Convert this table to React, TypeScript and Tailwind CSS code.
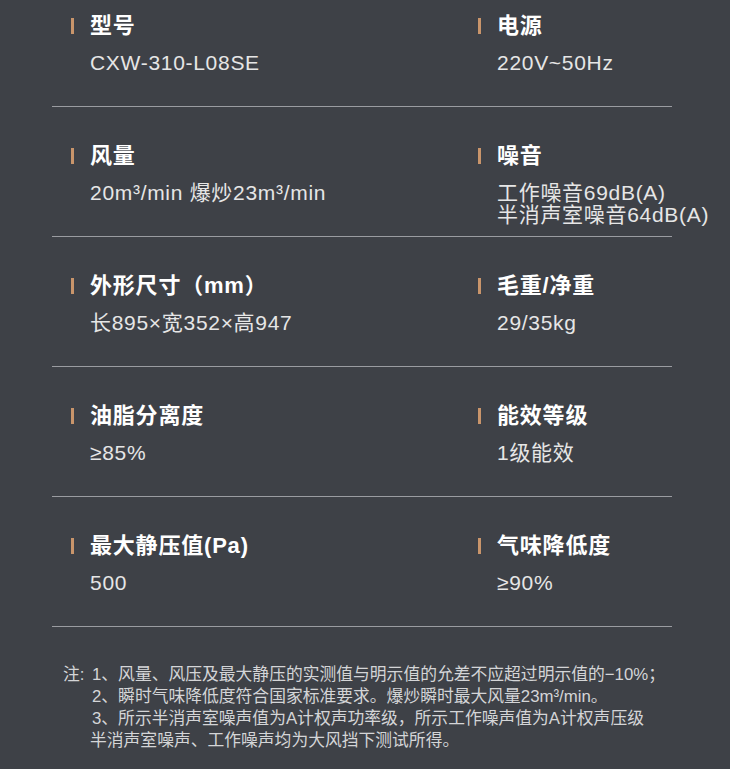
import React from 'react';

type Spec = { title: string; lines: React.ReactNode[] };

const rows: [Spec, Spec][] = [
  [
    { title: '型号', lines: ['CXW-310-L08SE'] },
    { title: '电源', lines: ['220V~50Hz'] },
  ],
  [
    { title: '风量', lines: ['20m³/min 爆炒23m³/min'] },
    { title: '噪音', lines: ['工作噪音69dB(A)', '半消声室噪音64dB(A)'] },
  ],
  [
    { title: '外形尺寸（mm）', lines: ['长895×宽352×高947'] },
    { title: '毛重/净重', lines: ['29/35kg'] },
  ],
  [
    { title: '油脂分离度', lines: ['≥85%'] },
    { title: '能效等级', lines: ['1级能效'] },
  ],
  [
    { title: '最大静压值(Pa)', lines: ['500'] },
    { title: '气味降低度', lines: ['≥90%'] },
  ],
];

const SpecCell = ({ spec }: { spec: Spec }) => (
  <div className="pl-[19px] whitespace-nowrap">
    <div className="flex items-center h-6">
      <div className="w-[3px] h-[16px] bg-[#c9956b] mr-4" />
      <span className="text-[22px] font-bold text-white leading-6 tracking-[0.8px]">{spec.title}</span>
    </div>
    <div className="pl-[19px] mt-[14px] text-[21px] leading-[22px] text-[#e6e6e6] tracking-[0.7px]">
      {spec.lines.map((l, i) => (
        <div key={i}>{l}</div>
      ))}
    </div>
  </div>
);

export default function App() {
  return (
    <div
      className="w-[730px] h-[769px] bg-[#3e4147] overflow-hidden"
      style={{ fontFamily: '"Liberation Sans", "Noto Sans CJK SC", sans-serif' }}
    >
      <div className="ml-[52px] w-[620px]">
        {rows.map((r, i) => (
          <div
            key={i}
            className={`grid grid-cols-[407px_1fr] border-b border-[#9a9ca1] ${i === 0 ? 'h-[107px] pt-[14px]' : 'h-[130px] pt-[37px]'}`}
          >
            <SpecCell spec={r[0]} />
            <SpecCell spec={r[1]} />
          </div>
        ))}
      </div>

      {/* notes */}
      <div className="flex mt-[37px] ml-[63px] text-[16.8px] leading-[22px] text-[#d4d5d7] whitespace-nowrap">
        <div className="w-[29px] shrink-0">注:</div>
        <div>
          <div>1、风量、风压及最大静压的实测值与明示值的允差不应超过明示值的−10%；</div>
          <div>2、瞬时气味降低度符合国家标准要求。爆炒瞬时最大风量23m³/min。</div>
          <div>3、所示半消声室噪声值为A计权声功率级，所示工作噪声值为A计权声压级</div>
          <div className="-ml-[2px]">半消声室噪声、工作噪声均为大风挡下测试所得。</div>
        </div>
      </div>
    </div>
  );
}
